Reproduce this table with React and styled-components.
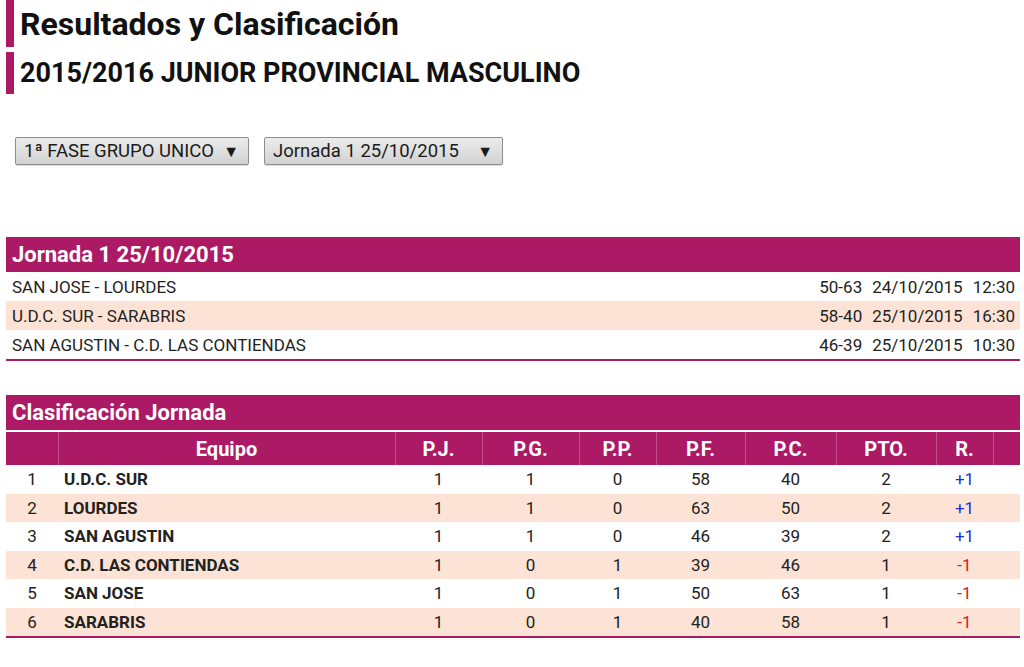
import styled, { createGlobalStyle } from 'styled-components';

const PURPLE = '#ac1a66';
const PEACH = '#fde3d5';

const GlobalStyle = createGlobalStyle`
  body {
    margin: 0;
    background: #fff;
    font-family: Roboto, "Liberation Sans", Arial, sans-serif;
    color: #1a1a1a;
  }
`;

const StPage = styled.div`
  padding: 0 4px 0 6px;
`;

const StTitle = styled.h1`
  margin: 0 0 ${(p) => p.$gap || 0}px;
  height: ${(p) => p.$height}px;
  display: flex;
  align-items: center;
  border-left: 8px solid ${PURPLE};
  padding-left: 6px;
  font-size: ${(p) => p.$size}px;
  font-weight: 700;
  color: #111;
`;

const StFilters = styled.div`
  display: flex;
  gap: 15px;
  margin-top: 43px;
  padding-left: 9px;
`;

const StSelect = styled.div`
  box-sizing: border-box;
  width: ${(p) => p.$width}px;
  height: 28px;
  display: flex;
  align-items: center;
  justify-content: space-between;
  padding: 0 9px 0 8px;
  border: 1px solid #8e8e8e;
  border-radius: 2px;
  background: linear-gradient(#ececec, #d2d2d2);
  box-shadow: 0 1px 1px rgba(0, 0, 0, 0.15);
  font-size: 18.5px;
  color: #1a1a1a;
`;

const StArrow = styled.span`
  font-size: 16px;
`;

const StSection = styled.section`
  margin-top: ${(p) => p.$top}px;
  border-bottom: 2px solid ${PURPLE};
`;

const StSectionHead = styled.div`
  height: 35px;
  display: flex;
  align-items: center;
  padding-left: 6px;
  background: ${PURPLE};
  color: #fff;
  font-size: 22px;
  font-weight: 700;
`;

const StMatch = styled.div`
  height: 29px;
  display: flex;
  align-items: center;
  padding: 0 5px 0 6px;
  background: ${(p) => (p.$alt ? PEACH : '#fff')};
  font-size: 17px;
  color: #222;
`;

const StTeams = styled.span`
  flex: 1;
`;

const StInfo = styled.span`
  margin-left: 10px;
`;

const StTable = styled.table`
  width: 100%;
  border-collapse: collapse;
  table-layout: fixed;
  border-top: 2px solid #fff;
`;

const StTh = styled.th`
  height: 33px;
  padding: 0;
  background: ${PURPLE};
  color: #fff;
  font-size: 20px;
  font-weight: 700;
  text-align: center;
  border-left: 1px solid rgba(255, 255, 255, 0.25);
  &:first-child {
    border-left: none;
  }
`;

const StRow = styled.tr`
  background: ${(p) => (p.$alt ? PEACH : '#fff')};
`;

const StTd = styled.td`
  height: 28.5px;
  padding: 0 ${(p) => (p.$left ? '6px' : '0')};
  font-size: 17px;
  font-weight: ${(p) => (p.$bold ? 700 : 400)};
  text-align: ${(p) => (p.$left ? 'left' : 'center')};
  color: ${(p) => p.$color || '#222'};
`;

const matches = [
  ['SAN JOSE - LOURDES', '50-63', '24/10/2015', '12:30'],
  ['U.D.C. SUR - SARABRIS', '58-40', '25/10/2015', '16:30'],
  ['SAN AGUSTIN - C.D. LAS CONTIENDAS', '46-39', '25/10/2015', '10:30'],
];

const columns = [
  ['', 52],
  ['Equipo', 337],
  ['P.J.', 87],
  ['P.G.', 97],
  ['P.P.', 77],
  ['P.F.', 89],
  ['P.C.', 91],
  ['PTO.', 100],
  ['R.', 57],
  ['', 27],
];

const standings = [
  [1, 'U.D.C. SUR', 1, 1, 0, 58, 40, 2, '+1'],
  [2, 'LOURDES', 1, 1, 0, 63, 50, 2, '+1'],
  [3, 'SAN AGUSTIN', 1, 1, 0, 46, 39, 2, '+1'],
  [4, 'C.D. LAS CONTIENDAS', 1, 0, 1, 39, 46, 1, '-1'],
  [5, 'SAN JOSE', 1, 0, 1, 50, 63, 1, '-1'],
  [6, 'SARABRIS', 1, 0, 1, 40, 58, 1, '-1'],
];

const App = () => {
  return (
    <StPage>
      <GlobalStyle />
      <StTitle $height={47} $size={32} $gap={5}>
        Resultados y Clasificación
      </StTitle>
      <StTitle $height={42} $size={27}>
        2015/2016 JUNIOR PROVINCIAL MASCULINO
      </StTitle>

      <StFilters>
        <StSelect $width={234}>
          1ª FASE GRUPO UNICO <StArrow>▼</StArrow>
        </StSelect>
        <StSelect $width={239}>
          Jornada 1 25/10/2015 <StArrow>▼</StArrow>
        </StSelect>
      </StFilters>

      <StSection $top={72}>
        <StSectionHead>Jornada 1 25/10/2015</StSectionHead>
        {matches.map((m, i) => (
          <StMatch key={m[0]} $alt={i % 2 === 1}>
            <StTeams>{m[0]}</StTeams>
            <StInfo>{m[1]}</StInfo>
            <StInfo>{m[2]}</StInfo>
            <StInfo>{m[3]}</StInfo>
          </StMatch>
        ))}
      </StSection>

      <StSection $top={34}>
        <StSectionHead>Clasificación Jornada</StSectionHead>
        <StTable>
          <colgroup>
            {columns.map(([, w], i) => (
              <col key={i} style={{ width: w }} />
            ))}
          </colgroup>
          <thead>
            <tr>
              {columns.map(([label], i) => (
                <StTh key={i}>{label}</StTh>
              ))}
            </tr>
          </thead>
          <tbody>
            {standings.map((r, i) => (
              <StRow key={r[0]} $alt={i % 2 === 1}>
                <StTd>{r[0]}</StTd>
                <StTd $left $bold>{r[1]}</StTd>
                <StTd>{r[2]}</StTd>
                <StTd>{r[3]}</StTd>
                <StTd>{r[4]}</StTd>
                <StTd>{r[5]}</StTd>
                <StTd>{r[6]}</StTd>
                <StTd>{r[7]}</StTd>
                <StTd $color={r[8].startsWith('+') ? '#1f2fd0' : '#d42020'}>{r[8]}</StTd>
                <StTd />
              </StRow>
            ))}
          </tbody>
        </StTable>
      </StSection>
    </StPage>
  );
};

export default App;
